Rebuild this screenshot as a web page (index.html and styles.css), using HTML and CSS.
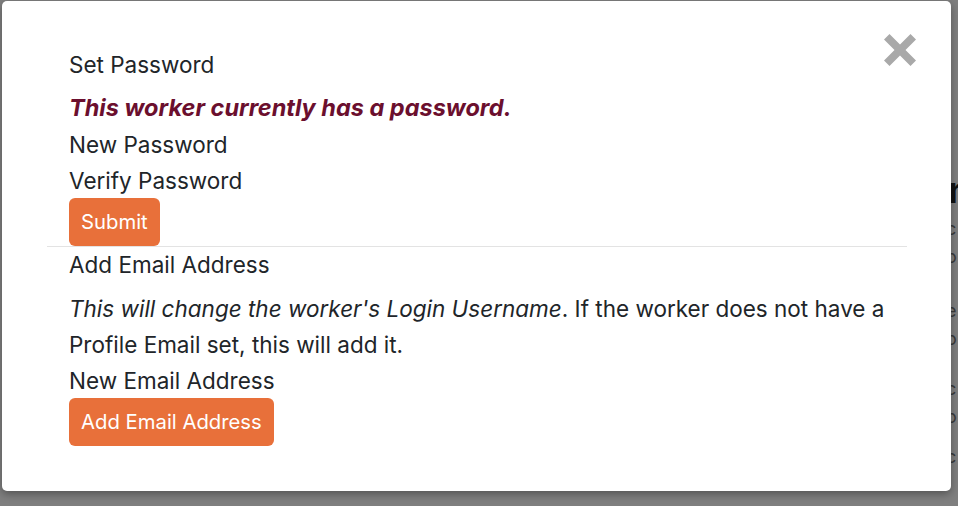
FILE: index.html
```html
<!DOCTYPE html>
<html lang="en">
<head>
<meta charset="utf-8">
<title>Set Password</title>
<link rel="stylesheet" href="styles.css">
</head>
<body>
<div class="backdrop-page">
  <div class="bg-col">
    <span class="bg-big">n</span>
    <span class="bg-t c1">c</span>
    <span class="bg-t c2">o</span>
    <span class="bg-t c3">e</span>
    <span class="bg-t c4">o</span>
    <span class="bg-t c5">c</span>
    <span class="bg-t c6">o</span>
    <span class="bg-t c7">c</span>
  </div>
</div>
<div class="modal">
  <button class="close" aria-label="Close">
    <svg width="32" height="32" viewBox="0 0 32 32"><path d="M0 5.5 L5.5 0 L16 10.5 L26.5 0 L32 5.5 L21.5 16 L32 26.5 L26.5 32 L16 21.5 L5.5 32 L0 26.5 L10.5 16 Z" fill="#a9a9a9"/></svg>
  </button>
  <div class="modal-body">
    <section class="block">
      <div class="heading">Set Password</div>
      <p class="warn">This worker currently has a password.</p>
      <label class="field first">New Password</label>
      <label class="field">Verify Password</label>
      <button class="btn">Submit</button>
    </section>
    <hr class="sep">
    <section class="block">
      <div class="heading">Add Email Address</div>
      <p class="note"><em>This will change the worker's Login Username</em>. If the worker does not have a Profile Email set, this will add it.</p>
      <label class="field">New Email Address</label>
      <button class="btn">Add Email Address</button>
    </section>
  </div>
</div>
</body>
</html>
```
FILE: styles.css
```css
html, body {
  margin: 0;
  padding: 0;
}
body {
  width: 958px;
  height: 506px;
  background: #7f7f7f;
  font-family: Inter, "Noto Sans", "Liberation Sans", sans-serif;
  color: #212529;
  overflow: hidden;
  position: relative;
}
.backdrop-page {
  display: flex;
  justify-content: flex-end;
  height: 506px;
}
.bg-col {
  width: 8px;
  display: flex;
  flex-direction: column;
  color: #3a3a3a;
  font-size: 18px;
  line-height: 1;
  overflow: hidden;
  padding-top: 172px;
}
.bg-big { font-size: 36px; font-weight: 700; color: #111; margin-left: -2px; }
.bg-t { margin-left: -4px; }
.c1 { margin-top: 12px; }
.c2 { margin-top: 10px; }
.c3 { margin-top: 36px; }
.c4 { margin-top: 10px; }
.c5 { margin-top: 32px; }
.c6 { margin-top: 10px; }
.c7 { margin-top: 22px; }

.modal {
  position: absolute;
  left: 2px;
  top: 1px;
  width: 949px;
  height: 490px;
  box-sizing: border-box;
  background: #fff;
  border-radius: 5px;
  box-shadow: 0 3px 8px rgba(0,0,0,0.35);
}
.close {
  position: absolute;
  right: 35px;
  top: 33px;
  padding: 0;
  border: 0;
  background: none;
  width: 32px;
  height: 32px;
  cursor: pointer;
}
.close svg { display: block; }
.modal-body {
  padding: 46px 44px 45px 45px;
}
.block {
  padding: 0 8px 0 22px;
  display: flex;
  flex-direction: column;
  align-items: flex-start;
}
.heading, .field, .warn, .note {
  font-size: 22.5px;
  line-height: 36px;
  margin: 0;
}
.warn {
  margin-top: 7px;
  font-size: 23.5px;
  font-weight: 700;
  font-style: italic;
  color: #6b0f2e;
}
.note {
  margin-top: 8px;
}
.field { display: block; }
.warn + .field.first { margin-top: 1px; }
.block .btn { margin-top: -1px; }
.btn {
  font-family: inherit;
  font-size: 20.3px;
  line-height: 36px;
  padding: 6px 12px 6px;
  background: #e8703a;
  color: #fff;
  border: 0;
  border-radius: 6px;
  cursor: pointer;
}
.sep {
  margin: 0;
  border: 0;
  border-top: 1px solid #e3e3e3;
}
```
